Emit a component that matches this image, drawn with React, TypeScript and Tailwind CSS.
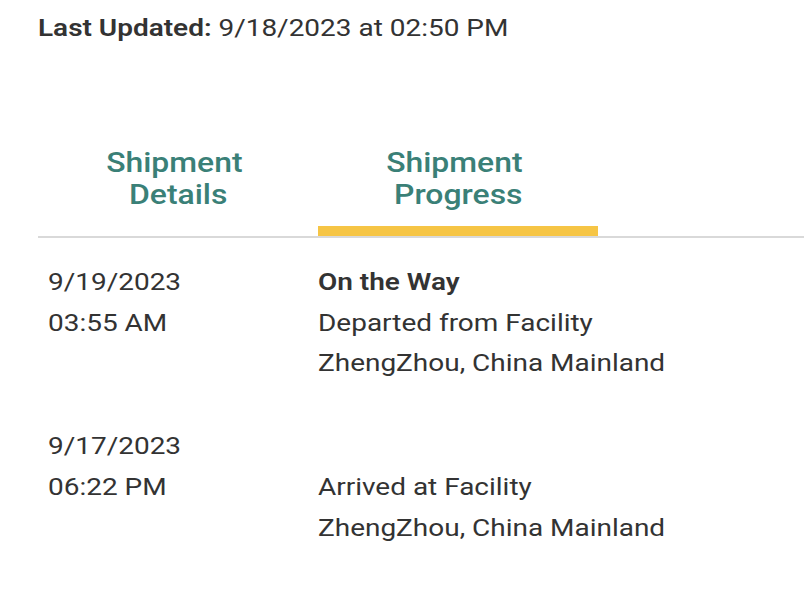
import React from 'react';

interface ProgressEvent {
  date: string;
  time: string;
  status?: string;
  activity: string;
  location: string;
}

const events: ProgressEvent[] = [
  {
    date: '9/19/2023',
    time: '03:55 AM',
    status: 'On the Way',
    activity: 'Departed from Facility',
    location: 'ZhengZhou, China Mainland',
  },
  {
    date: '9/17/2023',
    time: '06:22 PM',
    activity: 'Arrived at Facility',
    location: 'ZhengZhou, China Mainland',
  },
];

// the reference text runs a bit wider than Roboto, stretch each line
function Wide({ children, center }: { children: React.ReactNode; center?: boolean }) {
  return (
    <span
      className={
        center
          ? 'inline-block origin-center scale-x-[1.14] whitespace-pre'
          : 'inline-block origin-left scale-x-[1.165] whitespace-pre'
      }
    >
      {children}
    </span>
  );
}

export default function App() {
  return (
    <div className="min-h-[596px] w-[804px] overflow-hidden bg-white pl-[38px] pt-2 font-['Roboto',sans-serif] text-[24px] text-[#333333]">
      <p className="leading-[40.8px]">
        <Wide>
          <span className="font-semibold">Last Updated:</span> 9/18/2023 at 02:50 PM
        </Wide>
      </p>

      {/* tabs */}
      <div className="mt-[98px] flex border-b-2 border-[#d9d9d9]">
        <div className="w-[280px] border-b-[10px] border-transparent pb-[15px] text-center text-[28px] font-medium leading-[32px] text-[#3a8077]">
          <div><Wide center>Shipment&nbsp;</Wide></div>
          <div><Wide center>Details</Wide></div>
        </div>
        <div className="w-[280px] border-b-[10px] border-[#f6c545] pb-[15px] text-center text-[28px] font-medium leading-[32px] text-[#3a8077]">
          <div><Wide center>Shipment&nbsp;</Wide></div>
          <div><Wide center>Progress</Wide></div>
        </div>
      </div>

      {/* progress rows */}
      <div className="flex flex-col gap-[42px] pt-6">
        {events.map((ev) => (
          <div key={ev.date + ev.time} className="flex pl-[10px] leading-[40.8px]">
            <div className="w-[270px] shrink-0">
              <div><Wide>{ev.date}</Wide></div>
              <div><Wide>{ev.time}</Wide></div>
            </div>
            <div>
              <div className="font-semibold"><Wide>{ev.status ?? '\u00a0'}</Wide></div>
              <div><Wide>{ev.activity}</Wide></div>
              <div><Wide>{ev.location}</Wide></div>
            </div>
          </div>
        ))}
      </div>
    </div>
  );
}
